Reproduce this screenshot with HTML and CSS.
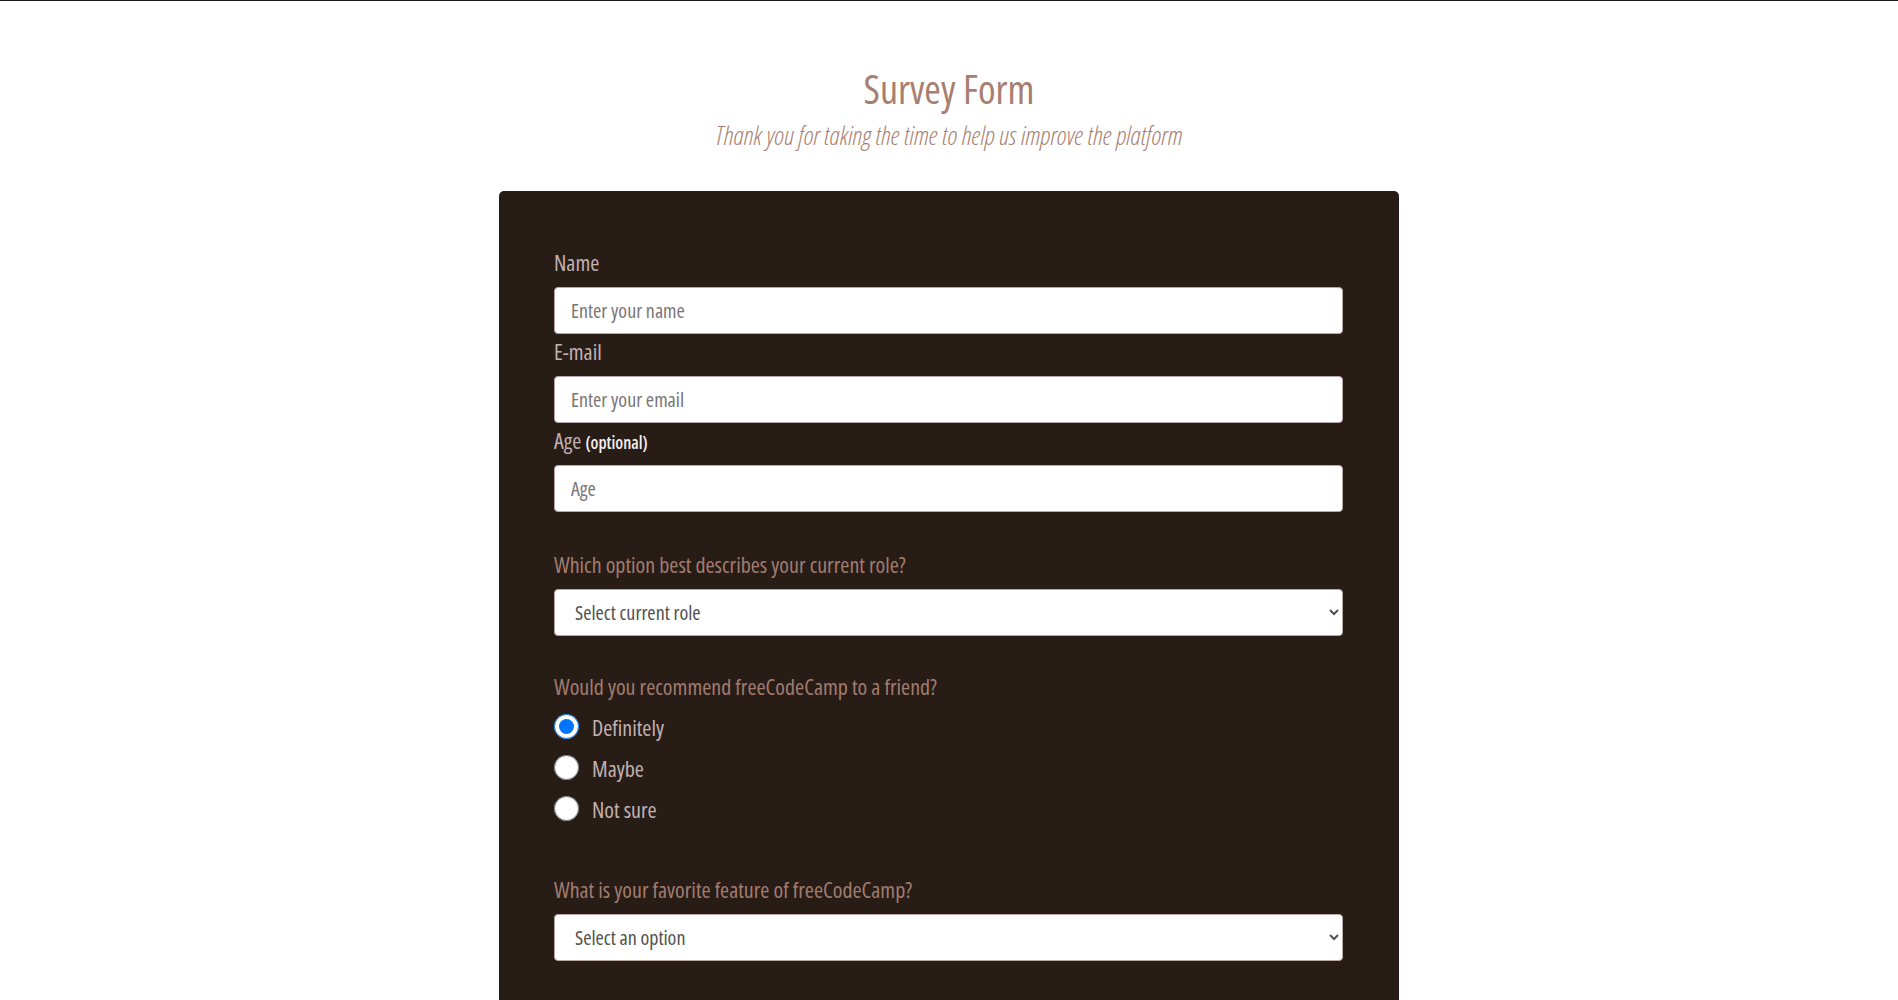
FILE: index.html
```html
<!DOCTYPE html>
<html lang="en">
<head>
<meta charset="utf-8">
<title>Survey Form</title>
<link rel="stylesheet" href="styles.css">
</head>
<body>
<header class="header">
  <h1 class="title">Survey Form</h1>
  <p class="subtitle">Thank you for taking the time to help us improve the platform</p>
</header>
<main class="card">
  <form class="form">
    <div class="group">
      <label class="label" for="name">Name</label>
      <input class="field" id="name" type="text" placeholder="Enter your name">
    </div>
    <div class="group">
      <label class="label" for="email">E-mail</label>
      <input class="field" id="email" type="email" placeholder="Enter your email">
    </div>
    <div class="group">
      <label class="label" for="age">Age <span class="optional">(optional)</span></label>
      <input class="field" id="age" type="number" placeholder="Age">
    </div>

    <div class="section">
      <p class="question">Which option best describes your current role?</p>
      <select class="field select">
        <option>Select current role</option>
        <option>Student</option>
        <option>Full Time Job</option>
        <option>Full Time Learner</option>
        <option>Prefer not to say</option>
        <option>Other</option>
      </select>
    </div>

    <div class="section">
      <p class="question">Would you recommend freeCodeCamp to a friend?</p>
      <div class="radios">
        <label class="radio-row"><input class="radio" type="radio" name="rec" checked><span>Definitely</span></label>
        <label class="radio-row"><input class="radio" type="radio" name="rec"><span>Maybe</span></label>
        <label class="radio-row"><input class="radio" type="radio" name="rec"><span>Not sure</span></label>
      </div>
    </div>

    <div class="section section-feature">
      <p class="question">What is your favorite feature of freeCodeCamp?</p>
      <select class="field select">
        <option>Select an option</option>
        <option>Challenges</option>
        <option>Projects</option>
        <option>Community</option>
        <option>Open Source</option>
      </select>
    </div>
  </form>
</main>
</body>
</html>
```
FILE: styles.css
```css
* { box-sizing: border-box; }

body {
  margin: 0;
  border-top: 1px solid #1c1b20;
  background: #ffffff;
  font-family: "Open Sans", "Noto Sans", sans-serif;
  font-stretch: 75%;
}

.header {
  text-align: center;
  padding-top: 63px;
}

.title {
  margin: 0;
  font-size: 40px;
  line-height: 50px;
  font-weight: 400;
  color: #a77f72;
}

.subtitle {
  margin: 6px 0 0;
  font-size: 26px;
  line-height: 30px;
  font-style: italic;
  font-weight: 300;
  color: #a77f72;
}

.card {
  width: 900px;
  margin: 41px auto 40px;
  padding: 56px 56px 80px 55px;
  background: #281d16;
  border-radius: 5px;
}

.form {
  display: flex;
  flex-direction: column;
}

.group {
  display: flex;
  flex-direction: column;
  margin-bottom: 2px;
}

.label {
  display: block;
  font-size: 22px;
  line-height: 30px;
  color: #c3b1b2;
  margin-bottom: 10px;
}

.optional {
  font-size: 17px;
  line-height: 1;
  font-weight: 600;
  color: #f4eeee;
}

.field {
  display: block;
  width: 100%;
  height: 47px;
  padding: 0 16px;
  border: 1px solid #b9a7a8;
  border-radius: 4px;
  background: #ffffff;
  font-family: "Open Sans", "Noto Sans", sans-serif;
  font-stretch: 75%;
  font-size: 20px;
  color: #3a3a3a;
  outline: none;
}

.field::placeholder {
  color: #7a7576;
}

.select {
  padding-left: 16px;
  padding-right: 4px;
  color: #505050;
}

.section {
  margin-top: 35px;
}

.question {
  margin: 0 0 10px;
  font-size: 22px;
  line-height: 30px;
  color: #a27c70;
}

.radios {
  display: flex;
  flex-direction: column;
  margin-top: -5px;
}

.radio-row {
  display: flex;
  align-items: center;
  gap: 13px;
  height: 41px;
  font-size: 22px;
  line-height: 30px;
  color: #c3b1b2;
}

.radio-row span {
  padding-top: 1px;
}

.radio {
  width: 25px;
  height: 25px;
  margin: 0;
  flex: none;
}

.section-feature {
  margin-top: 45px;
}
```
